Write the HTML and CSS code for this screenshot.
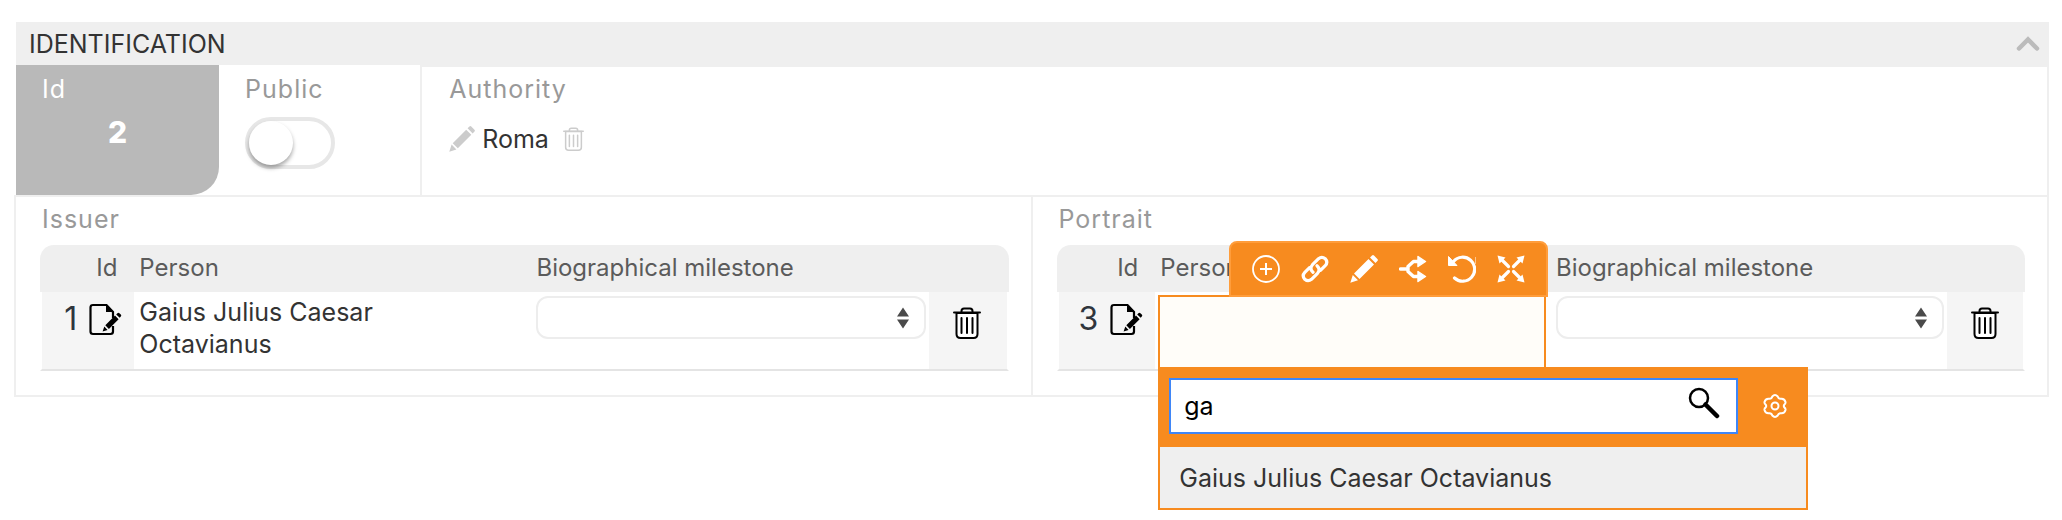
FILE: index.html
```html
<!DOCTYPE html>
<html lang="en">
<head>
  <meta charset="UTF-8">
  <title>Identification</title>
  <meta name="viewport" content="width=device-width, initial-scale=1.0">
  <link rel="stylesheet" href="styles.css">
</head>
<body>
  <!-- shared icons -->
  <svg class="sprite" aria-hidden="true">
    <symbol id="pencil" viewBox="0 0 28 28">
      <path d="M4 18.5 18.5 4l5.500 5.500L9.500 24zM20 2.500 22 .6q1-1 2 0l3.400 3.400q1 1 0 2L25.500 8zM2.800 20l5.200 5.200L.3 27.700z"/>
    </symbol>
    <symbol id="trash" viewBox="0 0 28 32">
      <path d="M3.500 6v21q0 4 4 4h13q4 0 4-4V6z" class="trash-body"/>
      <path d="M1 5.500h26M8.500 5V4q0-2.500 2.500-2.500h6q2.500 0 2.500 2.500v1M8.500 11v15M14 11v15M19.500 11v15" fill="none" stroke="currentColor" stroke-width="2" stroke-linecap="round"/>
    </symbol>
    <symbol id="edit" viewBox="0 0 33 33">
      <path d="M24 15V9L17.500 2H4Q1.500 2 1.500 4.500v24Q1.500 31 4 31h17.500q2.500 0 2.500-2.500V23" fill="none" stroke="currentColor" stroke-width="2.200"/>
      <path d="M17 1.500 24.500 9H17zM16.300 22.300 26 12.600l3.600 3.600-9.700 9.700zM27.200 11.400l1.200-1.200q1-1 2 0l1.400 1.400q1 1 0 2l-1.100 1.200zM15.300 23.600l3.300 3.300-5 1.700z"/>
    </symbol>
    <symbol id="sort" viewBox="0 0 12 22">
      <path d="M0 9.500 6 .5l6 9zM0 12.500h12l-6 9z"/>
    </symbol>
  </svg>

  <header class="panel-header">
    <h1>IDENTIFICATION</h1>
    <button class="icon-button" aria-label="Collapse">
      <svg width="24" height="16" viewBox="0 0 24 16"><path d="M3 12.500 12 3.500l9 9" fill="none" stroke="#bbb" stroke-width="4.500" stroke-linecap="round"/></svg>
    </button>
  </header>

  <div class="fields">
    <div class="field field-id">
      <span class="label">Id</span>
      <strong>2</strong>
    </div>
    <div class="field field-public">
      <label class="label" for="public">Public</label>
      <input class="switch" type="checkbox" id="public">
    </div>
    <div class="field field-authority">
      <span class="label">Authority</span>
      <div class="authority-value">
        <button class="icon-button" aria-label="Edit authority"><svg width="26" height="26"><use href="#pencil"/></svg></button>
        <span>Roma</span>
        <button class="icon-button" aria-label="Remove authority"><svg width="21" height="24"><use href="#trash"/></svg></button>
      </div>
    </div>
  </div>

  <div class="groups">
    <section class="group">
      <h2 class="label">Issuer</h2>
      <table>
        <thead>
          <tr>
            <th class="col-id">Id</th>
            <th class="col-wide">Person</th>
            <th class="col-wide">Biographical milestone</th>
            <th class="col-delete"></th>
          </tr>
        </thead>
        <tbody>
          <tr>
            <td class="col-id">
              <div class="row-id">
                <span>1</span>
                <button class="icon-button" aria-label="Edit row"><svg width="33" height="33"><use href="#edit"/></svg></button>
              </div>
            </td>
            <td class="person">Gaius Julius Caesar Octavianus</td>
            <td>
              <div class="select">
                <select aria-label="Biographical milestone"><option></option></select>
                <svg width="12" height="22"><use href="#sort"/></svg>
              </div>
            </td>
            <td class="col-delete">
              <button class="icon-button" aria-label="Delete row"><svg width="28" height="32"><use href="#trash"/></svg></button>
            </td>
          </tr>
        </tbody>
      </table>
    </section>

    <section class="group">
      <h2 class="label">Portrait</h2>
      <table>
        <thead>
          <tr>
            <th class="col-id">Id</th>
            <th class="col-wide">Person</th>
            <th class="col-wide">Biographical milestone</th>
            <th class="col-delete"></th>
          </tr>
        </thead>
        <tbody>
          <tr>
            <td class="col-id">
              <div class="row-id">
                <span>3</span>
                <button class="icon-button" aria-label="Edit row"><svg width="33" height="33"><use href="#edit"/></svg></button>
              </div>
            </td>
            <td class="editing">
              <div class="editor">
                <div class="toolbar">
                  <button class="icon-button" aria-label="Add">
                    <svg viewBox="0 0 28 28"><path d="M14 8v12M8 14h12" stroke="currentColor" stroke-width="2"/><circle cx="14" cy="14" r="13" fill="none" stroke="currentColor" stroke-width="1.800"/></svg>
                  </button>
                  <button class="icon-button" aria-label="Link">
                    <svg viewBox="0 0 28 28"><path d="M12 17.300q-4-3.600-.5-7.600l6-6q3.400-2.800 6.700 0 3.200 3.500 0 7l-4.500 4.500M16 10.700q4 3.600.5 7.600l-6 6q-3.400 2.800-6.700 0-3.200-3.500 0-7l4.500-4.500" fill="none" stroke="currentColor" stroke-width="3.200" stroke-linecap="round"/></svg>
                  </button>
                  <button class="icon-button" aria-label="Edit">
                    <svg><use href="#pencil"/></svg>
                  </button>
                  <button class="icon-button" aria-label="Split">
                    <svg viewBox="0 0 28 28"><path d="M1.500 14H8M20 6.500h-5.500L9 11.500v5l5.500 5H20" fill="none" stroke="currentColor" stroke-width="3.400" stroke-linecap="round" stroke-linejoin="round"/><path d="m19 1.500 7.500 5-7.500 5zM19 16.500l7.500 5-7.500 5z" stroke="currentColor" stroke-width="1.500" stroke-linejoin="round"/></svg>
                  </button>
                  <button class="icon-button" aria-label="Undo">
                    <svg viewBox="0 0 28 28"><path d="M5.500 6.500A12 12 0 1 1 6.500 23" fill="none" stroke="currentColor" stroke-width="3.200" stroke-linecap="round"/><path d="M.5 1.500V10.500h8.500z" stroke="currentColor" stroke-linejoin="round"/><path d="M28 2v7" stroke="currentColor"/></svg>
                  </button>
                  <button class="icon-button" aria-label="Expand">
                    <svg viewBox="0 0 28 28"><path d="m4 4 7.500 7.500M24 4l-7.500 7.500M4 24l7.500-7.500M24 24l-7.500-7.500" fill="none" stroke="currentColor" stroke-width="3.200" stroke-linecap="round"/><path d="M.5.5 8.500 2.500l-6 6zM27.500.5l-2 8-6-6zM.5 27.500l2-8 6 6zM27.500 27.500l-8-2 6-6z"/></svg>
                  </button>
                </div>
                <div class="dropdown">
                  <div class="search">
                    <div class="search-box">
                      <input type="text" value="ga" aria-label="Search person">
                      <svg width="32" height="32" viewBox="0 0 32 32"><circle cx="11" cy="11" r="9" fill="none" stroke="#000" stroke-width="2.500"/><path d="m17.500 17.500 11.500 11.500" stroke="#000" stroke-width="4.500" stroke-linecap="round"/></svg>
                    </div>
                    <button class="icon-button" aria-label="Settings">
                      <svg class="gear" width="24" height="24" viewBox="0 0 24 24"><circle cx="12" cy="12" r="3.500"/><path d="M9.300 2.500Q12-.3 14.700 2.500q.6 2.200 2.800 2.300 4-.6 5 3.200.3 1.500-1.200 2.600-1 1.400 0 2.800 1.500 1.100 1.200 2.600-1 3.800-5 3.200-2.200.1-2.800 2.300-2.700 2.800-5.400 0-.6-2.200-2.800-2.300-4 .6-5-3.200-.3-1.500 1.200-2.600 1-1.400 0-2.800Q1.200 9.500 1.500 8q1-3.800 5-3.200 2.200-.1 2.800-2.300z"/></svg>
                    </button>
                  </div>
                  <button class="option">Gaius Julius Caesar Octavianus</button>
                </div>
              </div>
            </td>
            <td>
              <div class="select">
                <select aria-label="Biographical milestone"><option></option></select>
                <svg width="12" height="22"><use href="#sort"/></svg>
              </div>
            </td>
            <td class="col-delete">
              <button class="icon-button" aria-label="Delete row"><svg width="28" height="32"><use href="#trash"/></svg></button>
            </td>
          </tr>
        </tbody>
      </table>
    </section>
  </div>
</body>
</html>
```
FILE: styles.css
```css
* {
  box-sizing: border-box;
}
body {
  min-height: 100vh;
  margin: 0;
  padding: 22px 13px 0 14px;
  background: #fff;
  color: #333;
  font-family: Inter, "Liberation Sans", sans-serif;
  font-size: 25px;
  line-height: 32px;
}
svg {
  display: block;
  fill: currentColor;
}
.sprite {
  position: absolute;
  width: 0;
  height: 0;
}
.trash-body {
  fill: #fff;
  stroke: currentColor;
  stroke-width: 2;
}
.gear {
  fill: none;
  stroke: currentColor;
  stroke-width: 2;
}
.icon-button {
  flex: none;
  padding: 0;
  border: 0;
  background: none;
  color: inherit;
  cursor: pointer;
}

.panel-header {
  display: flex;
  align-items: center;
  justify-content: space-between;
  height: 43px;
  margin-left: 2px;
  padding: 0 9px 0 13px;
  background: #efefef;
}
h1 {
  margin: 0;
  font-size: 25px;
  font-weight: 400;
}
.label {
  display: block;
  margin: 0;
  color: #999;
  font-size: 25px;
  font-weight: 400;
  letter-spacing: 1px;
}

.fields {
  display: flex;
  height: 132px;
  padding-left: 2px;
  border-right: 2px solid #efefef;
  border-bottom: 2px solid #efefef;
}
.field {
  padding: 8px 26px 0;
}
.field-id {
  width: 10%;
  background: #b9b9b9;
  color: #fff;
  border-bottom-right-radius: 28px;
}
.field-id .label {
  color: #fff;
}
.field-id strong {
  display: block;
  margin-top: 11px;
  font-size: 30px;
  font-weight: 800;
  text-align: center;
}
.field-public {
  width: 10%;
  border-right: 2px solid #efefef;
}
.field-authority {
  flex: 1;
  padding-top: 6px;
  padding-left: 27px;
  border-top: 2px solid #efefef;
}
.authority-value {
  display: flex;
  align-items: center;
  gap: 7px;
  margin-top: 18px;
}
.authority-value .icon-button {
  color: #ccc;
}
.authority-value .icon-button:last-child {
  margin-left: 7px;
}
.switch {
  appearance: none;
  display: block;
  width: 90px;
  height: 52px;
  margin: 12px 0 0;
  border: 4px solid #e7e7e7;
  border-radius: 26px;
  background: #fff;
  cursor: pointer;
}
.switch::before {
  content: "";
  display: block;
  width: 44px;
  height: 44px;
  border-radius: 50%;
  background: #fff;
  box-shadow: 0 3px 4px rgba(0, 0, 0, 0.35);
}
.switch:checked::before {
  margin-left: auto;
}

.groups {
  display: flex;
  border-right: 2px solid #efefef;
  border-bottom: 2px solid #efefef;
}
.group {
  flex: 1;
  min-width: 0;
  padding: 6px 22px 24px 24px;
  border-left: 2px solid #efefef;
}
.group .label {
  margin: 0 0 10px 2px;
}
table {
  width: 100%;
  border-spacing: 0;
}
th {
  height: 47px;
  padding: 0 5px 2px;
  background: #efefef;
  color: #5b5b5b;
  font-size: 24px;
  font-weight: 400;
  text-align: left;
}
th:first-child {
  border-top-left-radius: 14px;
}
th:last-child {
  border-top-right-radius: 14px;
}
th.col-id {
  padding-right: 17px;
  text-align: right;
}
th.col-wide {
  width: 41%;
}
td {
  height: 79px;
  padding: 4px 3px 0 5px;
  border-bottom: 2px solid #e4e4e4;
  vertical-align: top;
}
td.col-id {
  padding: 11px 12px 0 20px;
  border-left: 2px solid #fff;
  background: #f5f5f5;
}
td.col-delete {
  padding: 15px 24px 0;
  border-right: 2px solid #fff;
  background: #f5f5f5;
}
td.col-delete .icon-button {
  color: #000;
}
td.person {
  padding-right: 100px;
}
.row-id {
  display: flex;
  justify-content: flex-end;
  gap: 12px;
  color: #2f353d;
  font-size: 32px;
}
.row-id .icon-button {
  color: #000;
}
.select {
  position: relative;
}
.select select {
  appearance: none;
  display: block;
  width: 100%;
  height: 43px;
  border: 2px solid #ededed;
  border-radius: 12px;
  background: #fff;
  font: inherit;
}
.select svg {
  position: absolute;
  top: 11px;
  right: 17px;
  color: #4a4a4a;
  pointer-events: none;
}

td.editing {
  padding: 3px 5px 0 3px;
}
.editor {
  position: relative;
  height: 74px;
  border: 2px solid #f78b1f;
  background: #fffdf9;
}
.toolbar {
  position: absolute;
  right: -4px;
  bottom: 70px;
  display: flex;
  gap: 21px;
  padding: 12px 21px;
  border: 2px solid #ff9d3b;
  border-radius: 8px 8px 0 0;
  background: #f78b1f;
  color: #fff;
}
.toolbar svg {
  width: 28px;
  height: 28px;
}
.dropdown {
  position: absolute;
  z-index: 1;
  top: 70px;
  left: -2px;
  width: 650px;
  border: 2px solid #f78b1f;
  background: #efefef;
}
.search {
  display: flex;
  align-items: center;
  gap: 25px;
  padding: 9px 19px 13px 9px;
  background: #f78b1f;
  color: #fff;
}
.search-box {
  position: relative;
  flex: 1;
}
.search-box input {
  display: block;
  width: 100%;
  height: 56px;
  padding: 0 60px 0 13px;
  border: 2px solid #3f86f7;
  outline: 0;
  background: #fff;
  color: #000;
  font: inherit;
}
.search-box svg {
  position: absolute;
  top: 9px;
  right: 18px;
}
.option {
  display: block;
  width: 100%;
  height: 61px;
  padding: 0 19px;
  border: 0;
  background: #efefef;
  color: #333;
  font: inherit;
  text-align: left;
}
```
